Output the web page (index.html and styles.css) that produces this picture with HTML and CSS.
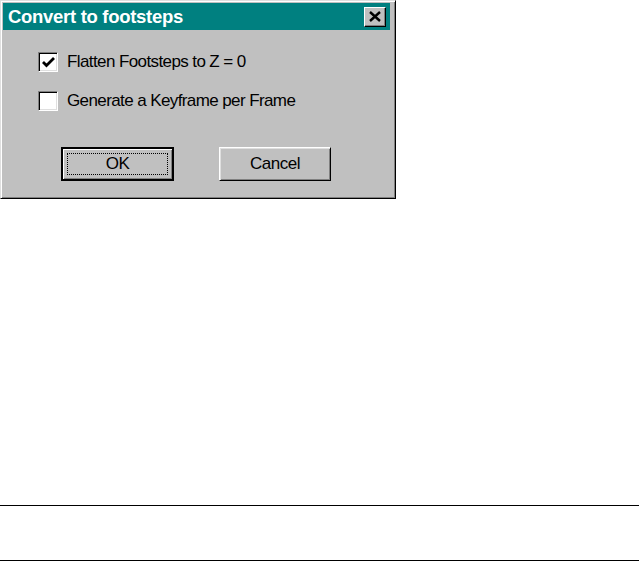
FILE: index.html
```html
<!DOCTYPE html>
<html lang="en">
<head>
    <meta charset="UTF-8">
    <meta name="viewport" content="width=device-width, initial-scale=1.0">
    <title>Convert to footsteps</title>
    <link rel="stylesheet" href="styles.css">
</head>

<body>
    <!-- dialog window -->
    <div class="window">
        <div class="titlebar">
            <span class="title">Convert to footsteps</span>
            <span class="close">
                <svg width="12" height="11" viewBox="0 0 12 11">
                    <path d="M1 1 L11 10 M11 1 L1 10" stroke="#000" stroke-width="2.4" fill="none"/>
                </svg>
            </span>
        </div>

        <div class="options">
            <label class="option">
                <span class="box checked">
                    <svg width="13" height="11" viewBox="0 0 13 11">
                        <path d="M1 5 L4.5 8.5 L12 1" stroke="#000" stroke-width="2.8" fill="none"/>
                    </svg>
                </span>
                <span>Flatten Footsteps to Z = 0</span>
            </label>
            <label class="option">
                <span class="box"></span>
                <span>Generate a Keyframe per Frame</span>
            </label>
        </div>

        <div class="buttons">
            <div class="btn default"><span class="focus">OK</span></div>
            <div class="btn">Cancel</div>
        </div>
    </div>

    <!-- rule lines at the bottom -->
    <div class="rules"></div>
</body>
</html>
```

FILE: styles.css
```css
body {
    margin: 0;
    background: #fff;
    font-family: "Liberation Sans", Arial, sans-serif;
}

/* window frame */
.window {
    box-sizing: border-box;
    width: 396px;
    height: 199px;
    padding: 3px 5px 0 3px;
    background: #c0c0c0;
    border: 1px solid;
    border-color: #dfdfdf #000 #000 #dfdfdf;
    box-shadow: inset 1px 1px #fff, inset -1px -1px #808080;
}

.titlebar {
    display: flex;
    align-items: center;
    justify-content: space-between;
    height: 27px;
    padding: 0 4px 0 5px;
    background: #008080;
    margin-top: -1px;
    margin-left: -1px;
}
.title {
    color: #fff;
    font-weight: bold;
    font-size: 18.5px;
    letter-spacing: -0.3px;
}
.close {
    box-sizing: border-box;
    width: 22px;
    height: 20px;
    display: flex;
    align-items: center;
    justify-content: center;
    background: #c0c0c0;
    border: 1px solid;
    border-color: #fff #000 #000 #fff;
    box-shadow: inset -1px -1px #808080;
}

/* checkboxes */
.options {
    display: flex;
    flex-direction: column;
    gap: 19px;
    padding: 22px 0 0 34px;
}
.option {
    display: flex;
    align-items: center;
    gap: 9px;
    font-size: 17px;
    letter-spacing: -0.6px;
    color: #000;
    height: 20px;
}
.box {
    box-sizing: border-box;
    width: 20px;
    height: 20px;
    background: #fff;
    border: 1px solid;
    border-color: #808080 #fff #fff #808080;
    box-shadow: inset 1px 1px #000, inset -1px -1px #dfdfdf;
    display: flex;
    align-items: center;
    justify-content: center;
}

/* buttons */
.buttons {
    display: flex;
    gap: 45px;
    padding: 36px 0 0 57px;
}
.btn {
    box-sizing: border-box;
    width: 112px;
    height: 34px;
    display: flex;
    align-items: center;
    justify-content: center;
    font-size: 17px;
    letter-spacing: -0.5px;
    background: #c0c0c0;
    border: 1px solid;
    border-color: #fff #000 #000 #fff;
    box-shadow: inset 1px 1px #dfdfdf, inset -1px -1px #808080;
}
.btn.default {
    width: 113px;
    border: 2px solid #000;
    box-shadow: inset 1px 1px #fff, inset -1px -1px #808080;
    padding: 4px;
}
.focus {
    box-sizing: border-box;
    width: 100%;
    height: 100%;
    display: flex;
    align-items: center;
    justify-content: center;
    border: 1px dotted #000;
}

.rules {
    width: 639px;
    height: 54px;
    margin-top: 306px;
    border-top: 1px solid #000;
    border-bottom: 1px solid #000;
}
```
